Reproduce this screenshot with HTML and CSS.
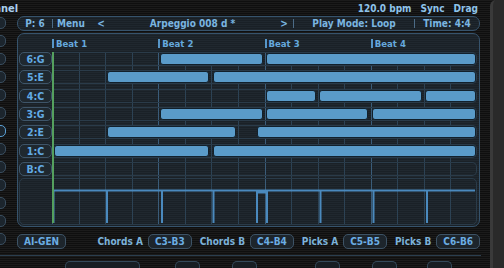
FILE: index.html
```html
<!DOCTYPE html>
<html>
<head>
<meta charset="utf-8">
<link rel="stylesheet" href="styles.css">
</head>
<body>
<div class="window">
  <div class="content">
    <div class="topbar">
      <span class="title">Channel</span>
      <div class="status"><span>120.0 bpm</span><span>Sync</span><span>Drag</span></div>
    </div>
    <div class="row">
      <div class="sidebar">
        <div class="sbtn"></div><div class="sbtn"></div><div class="sbtn"></div><div class="sbtn"></div>
        <div class="sbtn"></div><div class="sbtn"></div><div class="sbtn on"></div><div class="sbtn"></div>
        <div class="sbtn"></div><div class="sbtn"></div><div class="sbtn"></div><div class="sbtn"></div>
        <div class="sbtn"></div>
      </div>
      <div class="main">
        <div class="header">
          <div class="seg seg-p">P: 6</div>
          <div class="sep"></div>
          <div class="seg seg-menu">
            <span class="menu">Menu</span>
            <span class="nav">&lt;</span>
            <span class="name">Arpeggio 008 d *</span>
            <span class="nav">&gt;</span>
          </div>
          <div class="sep"></div>
          <div class="seg seg-mode">Play Mode: Loop</div>
          <div class="sep"></div>
          <div class="seg seg-time">Time: 4:4</div>
        </div>

        <div class="panel">
          <div class="beats">
            <div class="beat">Beat 1</div>
            <div class="beat">Beat 2</div>
            <div class="beat">Beat 3</div>
            <div class="beat">Beat 4</div>
          </div>
          <div class="lanes">
            <div class="lane">
              <div class="lab">6:G</div>
              <div class="roll">
                <div class="note" style="left:108px;width:103px"></div>
                <div class="note" style="left:214px;width:210px"></div>
              </div>
            </div>
            <div class="lane">
              <div class="lab">5:E</div>
              <div class="roll">
                <div class="note" style="left:55px;width:102px"></div>
                <div class="note" style="left:161px;width:263px"></div>
              </div>
            </div>
            <div class="lane">
              <div class="lab">4:C</div>
              <div class="roll">
                <div class="note" style="left:214px;width:50px"></div>
                <div class="note" style="left:267px;width:103px"></div>
                <div class="note" style="left:373px;width:51px"></div>
              </div>
            </div>
            <div class="lane">
              <div class="lab">3:G</div>
              <div class="roll">
                <div class="note" style="left:108px;width:103px"></div>
                <div class="note" style="left:214px;width:102px"></div>
                <div class="note" style="left:320px;width:104px"></div>
              </div>
            </div>
            <div class="lane">
              <div class="lab">2:E</div>
              <div class="roll">
                <div class="note" style="left:55px;width:129px"></div>
                <div class="note" style="left:205px;width:219px"></div>
              </div>
            </div>
            <div class="lane">
              <div class="lab">1:C</div>
              <div class="roll">
                <div class="note" style="left:2px;width:155px"></div>
                <div class="note" style="left:161px;width:263px"></div>
              </div>
            </div>
            <div class="lane">
              <div class="lab">B:C</div>
              <div class="roll"></div>
            </div>
            <div class="graph">
              <svg class="vel" width="425" height="45" viewBox="0 0 425 45">
                <path d="M1.5 44 V11.5 H423 M55 44 V11.5 M110 44 V11.5 M161.5 44 V11.5 M205 44 V13.5 H215 M215 44 V11.5 M268.5 44 V11.5 M321.5 44 V11.5 M375 44 V11.5" fill="none" stroke="#4a89bd" stroke-width="2"/>
              </svg>
            </div>
            <div class="playhead"></div>
          </div>
        </div>

        <div class="bottombar">
          <div class="box">AI-GEN</div>
          <div class="ranges">
            <span class="rl">Chords A</span><div class="box">C3-B3</div>
            <span class="rl">Chords B</span><div class="box">C4-B4</div>
            <span class="rl">Picks A</span><div class="box">C5-B5</div>
            <span class="rl">Picks B</span><div class="box">C6-B6</div>
          </div>
        </div>
      </div>
    </div>
    <div class="footer">
      <div class="fline"></div>
      <div class="ftabs">
        <div class="ftab t1"></div>
        <div class="ftab t2"></div>
        <div class="ftab t3"></div>
        <div class="ftab t4"></div>
        <div class="ftab t5"></div>
        <div class="ftab t6"></div>
      </div>
    </div>
  </div>
  <div class="frame"></div>
</div>
</body>
</html>
```

FILE: styles.css
```css
* { box-sizing: border-box; margin: 0; padding: 0; }
html, body { width: 504px; height: 268px; overflow: hidden; }
body {
  background: repeating-linear-gradient(to bottom, #1b1b1b 0 1px, #0f0f0f 1px 2px);
  font-family: "DejaVu Sans Condensed", "DejaVu Sans", sans-serif;
  font-stretch: condensed;
  font-weight: bold;
  font-size: 9.5px;
  color: #78b3df;
}
.window { display: flex; height: 268px; }
.content { width: 490px; flex: none; display: flex; flex-direction: column; overflow: hidden; }
.frame { flex: 1; background: #2a2a2a; border-left: 3px solid #3a3a3a; border-top-left-radius: 6px; }

.topbar { height: 16px; flex: none; display: flex; align-items: center; justify-content: space-between; padding-right: 12px; }
.title { font-size: 11px; color: #a9cfee; margin-left: -27px; }
.status { display: flex; gap: 9px; color: #8ec3ea; font-size: 10px; }

.row { display: flex; flex: none; }
.sidebar { width: 17px; flex: none; display: flex; flex-direction: column; gap: 6px; padding-top: 1px; }
.sbtn { width: 20px; height: 12px; margin-left: -14px; border: 1px solid #394d5e; border-radius: 5px; background: #1c252d; }
.sbtn.on { border-color: #5a9ed2; }

.main { width: 463px; flex: none; display: flex; flex-direction: column; }

.header {
  height: 15px; display: flex; align-items: center;
  border: 1px solid #36536c; border-radius: 7px;
  background: repeating-linear-gradient(to bottom, #1f272e 0 1px, #192026 1px 2px);
  color: #7ab5e0; font-size: 10px;
}
.seg { display: flex; align-items: center; justify-content: center; height: 100%; }
.seg-p { width: 34px; }
.sep { width: 1px; height: 9px; background: #4c6c87; flex: none; }
.seg-menu { width: 240px; justify-content: flex-start; padding-left: 4px; }
.seg-menu .menu { width: 40px; }
.seg-menu .nav { width: 8px; text-align: center; }
.seg-menu .name { flex: 1; text-align: center; }
.seg-menu .nav:last-child { margin-right: 5px; }
.seg-mode { width: 120px; }
.seg-time { flex: 1; }

.panel {
  margin-top: 2px; height: 194px;
  border: 1px solid #36536c; border-radius: 7px;
  background: repeating-linear-gradient(to bottom, #20282f 0 1px, #1a2127 1px 2px);
  padding: 0 2px 1px 1px;
}
.beats { height: 18px; display: grid; grid-template-columns: repeat(4, 106.25px); padding-left: 33px; align-items: center; color: #66a9dd; }
.beat { display: flex; align-items: center; gap: 2px; }
.beat::before { content: ""; width: 2px; height: 9px; background: #5796c8; }

.lanes {
  position: relative;
  background-image:
    repeating-linear-gradient(to right, #3a5c79 0 1px, transparent 1px 106.25px),
    repeating-linear-gradient(to right, #2c4254 0 1px, transparent 1px 26.5625px);
  background-size: 425px 100%, 425px 100%;
  background-position: 33px 0, 33px 0;
  background-repeat: no-repeat;
}
.lane { display: flex; height: 14px; margin-bottom: 4.33px; }
.lane:nth-child(7) { margin-bottom: 2px; }
.lab {
  width: 33px; flex: none; display: flex; align-items: center; justify-content: center;
  border: 1px solid #3e5569; border-radius: 5px; background: #1f282f;
  color: #62aae4; font-size: 10.5px;
}
.roll { flex: 1; position: relative; border: 1px solid #2a3b49; border-left: none; border-radius: 0 5px 5px 0; }
.note { position: absolute; top: 0; bottom: 0; border: 1px solid #12202b; border-radius: 3px; background: #5a9bc9; }

.graph { height: 47px; border: 1px solid #2a3b49; border-radius: 5px; padding-left: 32px; }
.vel { display: block; }
.playhead { position: absolute; left: 33px; top: 0; bottom: 2px; width: 2px; background: #55a05e; }

.bottombar { margin-top: 7px; height: 15px; display: flex; justify-content: space-between; align-items: center; }
.ranges { display: flex; align-items: center; }
.box {
  height: 15px; padding: 0 6px; display: flex; align-items: center;
  border: 1px solid #3d5366; border-radius: 5px; background: #1d252c; color: #6badE3; font-size: 10px;
}
.rl { color: #7cb2d9; font-size: 10px; margin: 0 5px 0 8px; }

.footer { margin-top: 6px; }
.fline { height: 1px; width: 481px; background: #2a3e4f; }
.ftabs { position: relative; height: 10px; display: flex; margin-top: 5px; }
.ftab { height: 10px; width: 25px; border: 1px solid #34495a; border-bottom: none; border-radius: 5px 5px 0 0; background: #181e23; }
.t1 { margin-left: 65px; width: 75px; }
.t2 { margin-left: 35px; }
.t3 { margin-left: 32px; }
.t4 { margin-left: 58px; }
.t5 { margin-left: 32px; }
.t6 { margin-left: 30px; }
```
